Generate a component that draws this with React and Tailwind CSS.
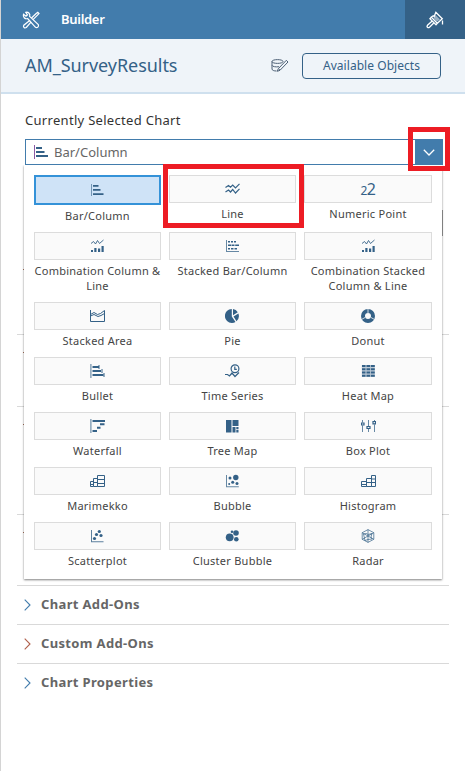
import React from "react";

const BLUE = "#346187";

function Svg({ children, w = 15, h = 14, className = "" }) {
  return (
    <svg
      width={w}
      height={h}
      viewBox={`0 0 ${w} ${h}`}
      className={`block shrink-0 ${className}`}
      fill={BLUE}
      stroke="none"
    >
      {children}
    </svg>
  );
}

const line = { fill: "none", stroke: BLUE, strokeWidth: 1 };

const BarIcon = () => (
  <Svg>
    <path d="M1 1h1v12h-1z" opacity=".6" />
    <path d="M3 2h5.500v1.700H3zM3 6h7.500v1.700H3zM3 10.300h10.500v1.700H3z" />
  </Svg>
);
const LineIcon = () => (
  <Svg>
    <path {...line} strokeWidth="1.2" d="M.5 5.500L3.500 3.500L5.500 5.200L7.700 3L10.500 6L14.500 1.800M.5 10L3.500 8L5.500 10L7.700 7.500L10.500 11L14.500 6.800" />
  </Svg>
);
const NumericIcon = () => (
  <span className="flex items-baseline pr-px leading-none tracking-[-0.5px] text-[#346187]">
    <span className="text-[12px] leading-none">2</span>
    <span className="text-[16px] leading-none">2</span>
  </span>
);
const ComboIcon = () => (
  <Svg>
    <path {...line} strokeWidth=".9" d="M1 4.500L3.500 2.500L5.500 5L7.500 1.500L9.500 4.500L13.500 1" />
    <path d="M1 11h2V13H1zM4.300 9h2.200V13H4.300zM8 9.500h2.200V13H8zM11.500 7h2.200v6h-2.200z" />
  </Svg>
);
const StackedBarIcon = () => (
  <Svg>
    <path d="M1 1h1v12H1zM2 12h12v1H2z" opacity=".75" />
    <path d="M3 2h2v1.500H3zM6 2h2v1.500H6zM9 2h2v1.500H9zM3 5.500h3.500V7H3zM7 5.500h2.500V7H7zM10.200 5.500H14V7h-3.800zM3 9h2v1.500H3zM6 9h2.500v1.500H6zM9.500 9H12v1.500H9.500z" />
  </Svg>
);
const AreaIcon = () => (
  <Svg>
    <path {...line} d="M.5 1v11.500h14V1.500L10.500 4.500L7.500 5.500L4 3.500L.5 5.500M.5 7L4 5.500L8 7.500L11 6.500L14.500 4.500" />
  </Svg>
);
const PieIcon = () => (
  <Svg>
    <path d="M6.800 0A7 7 0 0 0 7 14a7 7 0 0 0 3.500-1L6.800 7.500z" />
    <path d="M8 .1A7 7 0 0 1 12.800 3.300L8 6.300zM13.400 4.500A7 7 0 0 1 11.500 12.200L8.500 7.500z" />
  </Svg>
);
const DonutIcon = () => (
  <Svg>
    <circle cx="7" cy="7" r="5" fill="none" stroke={BLUE} strokeWidth="4" />
    <path d="M7 0v4.200M10 8.500l3.500 2M4 8.500l-3.500 2" stroke="#fafafa" strokeWidth=".8" />
  </Svg>
);
const BulletIcon = () => (
  <Svg>
    <path d="M0 0h1.700v14H0zM8 1h2v4H8zM11 5h2v4h-2zM13 9h2v4h-2z" opacity=".5" />
    <path d="M2.500 2H9v2H2.500zM2.500 6H11v2H2.500zM2.500 10H13.500v2H2.500z" />
  </Svg>
);
const TimeIcon = () => (
  <Svg>
    <circle {...line} cx="10" cy="4.800" r="3.900" strokeWidth="1.200" />
    <path {...line} d="M9.800 2.500v2.800h2M0 10.500h2.500l2 1.500l2.500-3l3 3.500l4-4" strokeWidth="1.200" />
  </Svg>
);
const HeatIcon = () => (
  <Svg>
    <path d="M.8 1h13v12h-13z" opacity=".3" />
    <path d="M1 1h3.500v2H1zM5.500 1h3.700v2H5.500zM10 1h3.800v2H10zM1 4.200h3.500v2H1zM5.500 4.200h3.700v2H5.500zM10 4.200h3.800v2H10zM1 7.500h3.500v2H1zM5.500 7.500h3.700v2H5.500zM10 7.500h3.800v2H10zM1 10.800h3.500v2H1zM5.500 10.800h3.700v2H5.500zM10 10.800h3.800v2H10z" />
  </Svg>
);
const WaterfallIcon = () => (
  <Svg>
    <path d="M0 0h1.700v14H0z" opacity=".5" />
    <path d="M2.500 1H15v2H2.500zM10 4.300h4.500v1.900H10zM7 7.800h3.500v1.900H7zM2.500 11H7v2H2.500z" />
  </Svg>
);
const TreeIcon = () => (
  <Svg>
    <path d="M1 1h5.500v12.500H1zM7.500 1h6v6h-6zM7.500 8h3v5.500h-3zM11.300 8h2.200v2.200h-2.200zM11.300 11h2.200v2.500h-2.200z" />
  </Svg>
);
const BoxPlotIcon = () => (
  <Svg>
    <path {...line} opacity=".75" d="M1.500 1v2.500M1.500 6.500V13M7.500 1v6M7.500 10v3M13.500 1v1M13.500 5.500V13" />
    <path {...line} strokeWidth="1.200" d="M.5 4h2.500v2H.5zM6 7.500h3v2H6zM12 2.500h2.500v2.300h-2.500z" />
  </Svg>
);
const MarimekkoIcon = () => (
  <Svg>
    <path {...line} d="M7.500 1.500h7v11h-7zM7.500 5.500h7M7.500 9.500h7M3.500 4.500h4M3.500 4.500v8h4M3.500 8.500h4M.5 7.500h3M.5 7.500v5h3M.5 10.500h3" />
  </Svg>
);
const BubbleIcon = () => (
  <Svg>
    <path d="M1 1h1v11.200h11.800v1H1z" opacity=".75" />
    <circle cx="10.800" cy="3.500" r="2.700" />
    <circle cx="5" cy="4" r="1.500" />
    <circle cx="7.700" cy="8.300" r="1.500" />
    <circle cx="4.200" cy="10" r="1" />
    <circle cx="12" cy="9.500" r="1.500" />
  </Svg>
);
const HistogramIcon = () => (
  <Svg>
    <path {...line} d="M.5 7.500h5v5H.5zM.5 10.500h5M5.500 4.500h5v8h-5zM5.500 8.500h5M10.500 1.500h4v11h-4zM10.500 5h4M10.500 8.500h4" />
  </Svg>
);
const ScatterIcon = () => (
  <Svg>
    <path d="M1 1h1v11.200h11.500v1H1z" opacity=".8" />
    <circle cx="9.300" cy="2.500" r="1.600" />
    <circle cx="6.500" cy="5.500" r="1.600" />
    <circle cx="11" cy="6.500" r="1.600" />
    <circle cx="4.500" cy="9.500" r="1.600" />
  </Svg>
);
const ClusterIcon = () => (
  <Svg>
    <circle cx="4.700" cy="8.300" r="3.900" />
    <circle cx="11" cy="4" r="2.800" />
    <circle cx="11.300" cy="10.300" r="2.300" />
    <circle cx="7" cy="2.800" r="1.300" />
  </Svg>
);
const RadarIcon = () => (
  <Svg>
    <path {...line} strokeWidth=".7" d="M7 .6L12.800 3.700V10.300L7 13.400L1.200 10.300V3.700zM1.200 3.700L7 7L12.800 3.700M7 .6V13.400M1.200 10.300L7 7L12.800 10.300M2.500 5l3-.5l1.500 1l4-1l-1 3.500l1 2l-4 .5l-3 1z" />
  </Svg>
);

const charts = [
  ["Bar/Column", BarIcon],
  ["Line", LineIcon],
  ["Numeric Point", NumericIcon],
  ["Combination Column & Line", ComboIcon],
  ["Stacked Bar/Column", StackedBarIcon],
  ["Combination Stacked Column & Line", ComboIcon],
  ["Stacked Area", AreaIcon],
  ["Pie", PieIcon],
  ["Donut", DonutIcon],
  ["Bullet", BulletIcon],
  ["Time Series", TimeIcon],
  ["Heat Map", HeatIcon],
  ["Waterfall", WaterfallIcon],
  ["Tree Map", TreeIcon],
  ["Box Plot", BoxPlotIcon],
  ["Marimekko", MarimekkoIcon],
  ["Bubble", BubbleIcon],
  ["Histogram", HistogramIcon],
  ["Scatterplot", ScatterIcon],
  ["Cluster Bubble", ClusterIcon],
  ["Radar", RadarIcon],
];

function ChartOption({ label, Icon, selected, last }) {
  return (
    <div className="flex flex-col">
      <div
        className={`flex items-center justify-center ${
          selected
            ? "h-[30px] border-2 border-[#3492d8] bg-[#cfe3f7]"
            : "h-7 border border-[#dcdcdc] bg-[#fafafa]"
        } ${last ? "pl-px" : ""}`}
      >
        <Icon />
      </div>
      <div className="-mx-1 mt-[3px] text-center text-[11px] leading-[15px] tracking-[0.25px] text-[#444]">{label}</div>
    </div>
  );
}

function Section({ label, color }) {
  return (
    <div className="mx-4 flex h-[39px] items-center border-t border-[#d9d9d9] pb-px pl-[7px]">
      <svg width="7" height="12" viewBox="0 0 7 12" className="shrink-0">
        <path d="M.7 .7L6 6L.7 11.300" fill="none" stroke={color} strokeWidth="1.100" />
      </svg>
      <span className="ml-[10px] text-[13px] font-bold leading-none tracking-[0.35px] text-[#666]">{label}</span>
    </div>
  );
}

// Collapsed section whose row sits almost entirely beneath the open list.
function CoveredSection({ height, lead }) {
  return (
    <div className={`mx-4 border-t pl-1.5 ${height} ${lead}`}>
      <div className="h-px w-1 bg-[#a5725e]" />
    </div>
  );
}

export default function App() {
  return (
    <div className="h-[771px] w-[465px] overflow-hidden border-l border-[#d4d4d4] bg-white font-['Noto_Sans',sans-serif]">
      <header className="flex h-[39px] items-center bg-[#427cac]">
        <svg width="18" height="18" viewBox="0 0 18 18" className="ml-[21px] shrink-0" fill="none" stroke="#fff" strokeWidth="1.200">
          <path d="M1.500 3.200L4 5.200L5.500 3.800L3.800 1.300C6.500.8 8.500 3 7.600 5.400L16.300 13.600C17.200 15.600 15.200 17.300 13.500 16.300L5.600 7.500C3 8.500 .6 6 1.500 3.200z" />
          <path d="M9.500 7L14.200 2.500L15.800 1.300L17 2.500L15.500 4.200L11 8.700M8 9.200L1.800 14.200C.8 16.200 2.600 17.500 4.300 16.500L9.200 10.800" />
        </svg>
        <span className="ml-[21px] pb-px text-[13px] font-semibold leading-none tracking-[-0.3px] text-white">Builder</span>
        <div className="ml-auto flex h-full w-[60px] items-center justify-center bg-[#346187]">
          <svg width="18" height="18" viewBox="0 0 18 18" fill="none" stroke="#fff" strokeWidth="1.300">
            <path d="M9.800 1.300L16.300 7.800L11.300 12.300L5.300 6.200L7.200 4.800L8.200 5.500zM5.300 6.200L3.900 7.800L10 13.800L11.300 12.300M6.200 10L1.500 14.300C.3 16 2 17.300 3.500 16.200L8 11.800" />
            <path d="M9.500 4L14 8.500L11 10.500L7.500 7z" fill="#fff" opacity=".5" stroke="none" />
            <path d="M16.500 9.500v4" />
          </svg>
        </div>
      </header>

      <div className="flex h-[55px] items-center border-b-2 border-[#cfe0ee] bg-[#eff4f9] pl-6 pr-6">
        <h1 className="pb-0.5 text-[18px] leading-none tracking-[-0.05px] text-[#346187]">AM_SurveyResults</h1>
        <svg width="18" height="16" viewBox="0 0 18 16" className="ml-auto shrink-0" fill="none" stroke="#4c5f75" strokeWidth="1">
          <path d="M1 3.500C1 1 12 1 12 3.500S1 6 1 3.500zM1 3.500V11C1 12.300 3 13 5.500 13M1 7.300C1.500 8.700 5 9.200 8 8.700" />
          <path d="M15.300 2.300L17 4L9 12.300L6.300 13.300L7.300 10.700zM8 10.800L9.200 12" />
        </svg>
        <button className="ml-[13px] h-[26px] w-[139px] rounded-[4px] border border-[#346187] text-[12px] leading-none tracking-[0.05px] text-[#346187]">
          Available Objects
        </button>
      </div>

      <main className="relative pt-[18px]">
        <div className="pl-6 text-[13px] leading-4 tracking-[0.3px] text-[#333]">Currently Selected Chart</div>
        <div className="ml-6 mt-[11px] flex h-[26px] w-[418px] items-center border border-[#427cac] bg-white">
          <svg width="16" height="14" viewBox="0 0 16 14" className="ml-[7px] shrink-0">
            <path d="M1 0h1v14H1z" fill="#8b5aa5" />
            <path d="M3 2h6v2H3zM3 6h8.500v2H3zM3 10h12v2H3z" fill={BLUE} />
          </svg>
          <span className="ml-[5px] text-[13px] leading-none text-[#666]">Bar/Column</span>
          <div className="-my-px -mr-px ml-auto flex h-[26px] w-7 items-center justify-center bg-[#427cac]">
            <svg width="12" height="7" viewBox="0 0 12 7">
              <path d="M.8 .8L6 6L11.200 .8" fill="none" stroke="#fff" strokeWidth="1.300" />
            </svg>
          </div>
        </div>

        <div className="pt-[84px]">
          <CoveredSection height="h-[85px]" lead="border-transparent pt-[19px]" />
          <CoveredSection height="h-[72px]" lead="border-[#d9d9d9] pt-[17px]" />
          <CoveredSection height="h-[108px]" lead="border-[#d9d9d9] pt-[17px]" />
          <CoveredSection height="h-[71px]" lead="border-[#d9d9d9] pt-[17px]" />
          <Section label="Chart Add-Ons" color="#427cac" />
          <Section label="Custom Add-Ons" color="#b0604c" />
          <Section label="Chart Properties" color="#427cac" />
        </div>

        {/* Scroll thumb showing beside the open list */}
        <div className="absolute left-[441px] top-[116px] h-[26px] w-px bg-[#999]" />

        <div className="absolute left-[23px] top-[71px] grid h-[414px] w-[418px] grid-cols-[127px_127px_128px] content-start gap-x-2 gap-y-[9px] bg-white pl-[10px] pt-[10px] shadow-[0_1px_2px_rgba(0,0,0,0.5)] [clip-path:inset(0_-6px_-6px_-6px)]">
          {charts.map(([label, Icon], i) => (
            <ChartOption key={label} label={label} Icon={Icon} selected={i === 0} last={i % 3 === 2} />
          ))}
        </div>

        {/* Highlight frames */}
        <div className="absolute left-[162px] top-[70px] h-[64px] w-[141px] border-[5px] border-[#ed1c24]" />
        <div className="absolute left-[407px] top-[33px] h-[44px] w-[42px] border-[5px] border-[#ed1c24]" />
      </main>
    </div>
  );
}
